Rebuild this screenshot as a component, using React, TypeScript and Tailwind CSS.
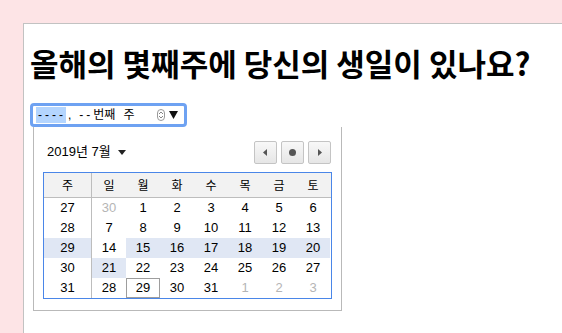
import React from "react";

const F = '"Liberation Sans", "Noto Sans CJK KR", sans-serif';

type Cell = { t: string; gray?: boolean; hl?: boolean; today?: boolean };

const rows: { w: string; hl?: boolean; days: Cell[] }[] = [
  { w: "27", days: [{ t: "30", gray: true }, { t: "1" }, { t: "2" }, { t: "3" }, { t: "4" }, { t: "5" }, { t: "6" }] },
  { w: "28", days: [{ t: "7" }, { t: "8" }, { t: "9" }, { t: "10" }, { t: "11" }, { t: "12" }, { t: "13" }] },
  { w: "29", hl: true, days: [{ t: "14" }, { t: "15", hl: true }, { t: "16", hl: true }, { t: "17", hl: true }, { t: "18", hl: true }, { t: "19", hl: true }, { t: "20", hl: true }] },
  { w: "30", days: [{ t: "21", hl: true }, { t: "22" }, { t: "23" }, { t: "24" }, { t: "25" }, { t: "26" }, { t: "27" }] },
  { w: "31", days: [{ t: "28" }, { t: "29", today: true }, { t: "30" }, { t: "31" }, { t: "1", gray: true }, { t: "2", gray: true }, { t: "3", gray: true }] },
];

const heads = ["일", "월", "화", "수", "목", "금", "토"];

function NavBtn({ children }: { children: React.ReactNode }) {
  return (
    <div className="w-[23px] h-[23px] border border-[#c4c4c4] rounded-[2px] bg-gradient-to-b from-[#f8f8f8] to-[#e6e6e6] flex items-center justify-center">
      {children}
    </div>
  );
}

export default function App() {
  return (
    <div className="w-[562px] h-[333px] bg-[#fde4e6] pl-[23px] pt-[23px] overflow-hidden" style={{ fontFamily: F }}>
      <div className="h-full bg-white border-l border-t border-[#c2c2c2] pl-[6px]">
        <h1 className="text-[31px] font-bold leading-[38px] mt-[20px] text-black whitespace-nowrap" style={{ fontFamily: '"Noto Sans CJK KR", sans-serif' }}>
          올해의 몇째주에 당신의 생일이 있나요?
        </h1>
        <div className="mt-[21px] w-[157px] h-[24px] rounded-[4px] border-[3px] border-[#6ea2f2] flex items-center pl-[3px] pr-[6px] text-[12px] text-black whitespace-nowrap">
          <span className="bg-[#b4d5fe] leading-[16px] pl-[2px] tracking-[3px]">----</span>
          <span className="ml-[2px]">,</span>
          <span className="ml-[8px] tracking-[3px]">--</span>
          <span>번째</span>
          <span className="ml-[8px]">주</span>
          <div className="flex-1" />
          <div className="w-[8px] h-[12px] border border-[#9a9a9a] rounded-[4px] flex flex-col items-center justify-center mr-[4px]">
            <svg width="6" height="10" viewBox="0 0 6 10">
              <path d="M1 4 L3 2 L5 4" stroke="#666" strokeWidth="0.8" fill="none" />
              <path d="M1 6 L3 8 L5 6" stroke="#666" strokeWidth="0.8" fill="none" />
            </svg>
          </div>
          <svg width="9" height="8" viewBox="0 0 9 8">
            <path d="M0 0 L9 0 L4.5 8 Z" fill="#111" />
          </svg>
        </div>
        <div className="ml-[3px] w-[309px] h-[184px] border border-t-0 border-[#b9b9b9] bg-white px-[9px]">
          <div className="h-[45px] flex items-center">
            <div className="flex items-center text-[13px] text-black pl-[4px] pt-[5px]" style={{ fontFamily: F }}>
              2019년 7월
              <svg className="ml-[7px]" width="8" height="5" viewBox="0 0 8 5">
                <path d="M0 0 L8 0 L4 5 Z" fill="#222" />
              </svg>
            </div>
            <div className="flex-1" />
            <div className="flex gap-[4px] mr-[1px] mt-[5px]">
              <NavBtn>
                <svg width="5" height="7" viewBox="0 0 5 7"><path d="M4 0 L0 3.5 L4 7 Z" fill="#555" /></svg>
              </NavBtn>
              <NavBtn>
                <div className="w-[7px] h-[7px] rounded-full bg-[#555]" />
              </NavBtn>
              <NavBtn>
                <svg width="5" height="7" viewBox="0 0 5 7"><path d="M1 0 L5 3.5 L1 7 Z" fill="#555" /></svg>
              </NavBtn>
            </div>
          </div>
          <div className="border border-[#4a86e8] w-[289px]">
            <div className="flex h-[25px] bg-[#f2f2f2] border-b border-[#bdbdbd] text-[12px] text-black" style={{ fontFamily: '"Noto Sans CJK KR", sans-serif' }}>
              <div className="w-[48px] flex items-center justify-center border-r border-[#bdbdbd]">주</div>
              {heads.map((h) => (
                <div key={h} className="w-[34px] flex items-center justify-center">{h}</div>
              ))}
            </div>
            {rows.map((r) => (
              <div key={r.w} className="flex h-[20px] text-[13px]">
                <div className={`w-[48px] flex items-center justify-center border-r border-[#bdbdbd] text-black ${r.hl ? "bg-[#e0e7f4]" : ""}`}>{r.w}</div>
                {r.days.map((d, i) => (
                  <div
                    key={i}
                    className={`w-[34px] flex items-center justify-center ${d.hl ? "bg-[#e0e7f4]" : ""} ${d.gray ? "text-[#b5b5b5]" : "text-black"} ${d.today ? "border border-[#9d9d9d]" : ""}`}
                  >
                    {d.t}
                  </div>
                ))}
              </div>
            ))}
          </div>
        </div>
      </div>
    </div>
  );
}
